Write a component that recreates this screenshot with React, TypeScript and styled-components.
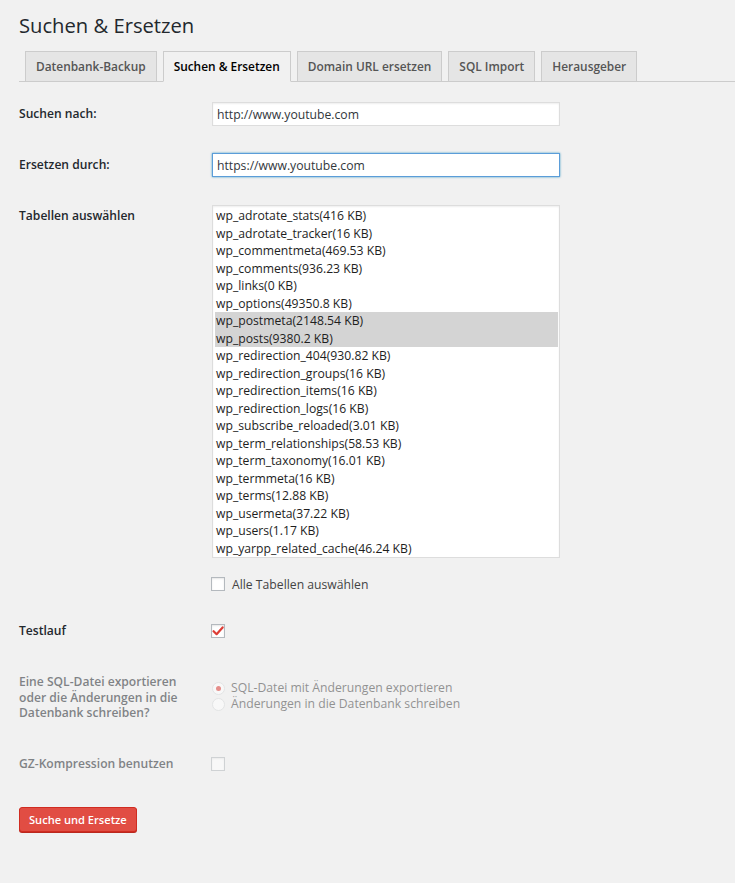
import React from "react";
import styled, { createGlobalStyle } from "styled-components";

const Global = createGlobalStyle`
  html, body { margin: 0; padding: 0; background: #f1f1f1; }
  body { font-family: "Open Sans", "Liberation Sans", sans-serif; font-size: 12.2px; color: #444; }
  * { box-sizing: border-box; }
`;

const Page = styled.div`
  padding: 11px 0 60px 19px;
  min-height: 883px;
`;

const Title = styled.h1`
  margin: 0;
  font-size: 20.2px;
  font-weight: 400;
  line-height: 29px;
  color: #23282d;
`;

const Tabs = styled.nav`
  display: flex;
  margin-top: 11px;
  border-bottom: 1px solid #ccc;
  height: 31px;
`;

const Tab = styled.a<{ $active?: boolean }>`
  display: block;
  margin-left: 6px;
  padding: 5px 10px;
  height: 31px;
  line-height: 19px;
  font-size: 11.9px;
  font-weight: 600;
  border: 1px solid #ccc;
  border-bottom-color: ${(p) => (p.$active ? "#f1f1f1" : "#ccc")};
  background: ${(p) => (p.$active ? "#f1f1f1" : "#e5e5e5")};
  color: ${(p) => (p.$active ? "#000" : "#555")};
  white-space: nowrap;
  cursor: pointer;
`;

const Row = styled.div<{ $top: number; $align?: string; $faded?: boolean }>`
  display: grid;
  grid-template-columns: 193px 348px;
  align-items: ${(p) => p.$align || "center"};
  margin-top: ${(p) => p.$top}px;
  opacity: ${(p) => (p.$faded ? 0.55 : 1)};
`;

const Label = styled.div<{ $pad?: number }>`
  font-size: 12.1px;
  font-weight: 600;
  color: #23282d;
  line-height: 15.5px;
  padding-top: ${(p) => p.$pad || 0}px;
`;

const Input = styled.input<{ $focus?: boolean }>`
  width: 348px;
  height: 24px;
  margin: 0;
  padding: 0 4px;
  font-family: inherit;
  font-size: 12.2px;
  color: #32373c;
  background: #fff;
  border: 1px solid ${(p) => (p.$focus ? "#5b9dd9" : "#ddd")};
  box-shadow: ${(p) =>
    p.$focus ? "0 0 2px rgba(30,140,190,.8)" : "inset 0 1px 2px rgba(0,0,0,.07)"};
  outline: none;
`;

const Field = styled.div<{ $pad?: number }>`
  display: flex;
  flex-direction: column;
  padding-top: ${(p) => p.$pad || 0}px;
`;

const List = styled.div`
  width: 348px;
  height: 353px;
  background: #fff;
  border: 1px solid #ddd;
  box-shadow: inset 0 1px 2px rgba(0,0,0,.07);
  padding: 1px 1px 0 2px;
  overflow: hidden;
`;

const Option = styled.div<{ $sel?: boolean }>`
  height: 17.5px;
  line-height: 17.5px;
  padding-left: 1px;
  color: #1e1e1e;
  background: ${(p) => (p.$sel ? "#d4d4d4" : "transparent")};
  white-space: nowrap;
`;

const CheckLine = styled.label<{ $top?: number }>`
  display: flex;
  align-items: center;
  height: 18px;
  margin-top: ${(p) => p.$top || 0}px;
  color: #444;
`;

const Box = styled.span`
  display: inline-flex;
  align-items: center;
  justify-content: center;
  width: 14px;
  height: 14px;
  margin-left: -1px;
  margin-right: 7px;
  background: #fff;
  border: 1px solid #b4b9be;
  box-shadow: inset 0 1px 2px rgba(0,0,0,.1);
  flex: none;
`;

const Radio = styled.span<{ $on?: boolean }>`
  position: relative;
  display: inline-block;
  width: 13px;
  height: 13px;
  margin-right: 6px;
  border-radius: 50%;
  background: #fff;
  border: 1px solid #d8dadc;
  flex: none;
  &::after {
    content: "";
    display: ${(p) => (p.$on ? "block" : "none")};
    position: absolute;
    left: 3px;
    top: 3px;
    width: 5px;
    height: 5px;
    border-radius: 50%;
    background: #dd3d36;
  }
`;

const RadioLine = styled.label`
  display: flex;
  align-items: center;
  height: 16px;
  line-height: 16px;
  color: #444;
  white-space: nowrap;
`;

const Button = styled.button`
  margin-top: 34px;
  height: 25px;
  padding: 0 9px;
  font-family: inherit;
  font-size: 11.1px;
  font-weight: 600;
  line-height: 23px;
  color: #fff;
  background: #e14d43;
  border: 1px solid #d02c21;
  border-radius: 3px;
  box-shadow: 0 1px 0 #ba281e;
  cursor: pointer;
`;

const tables: [string, boolean][] = [
  ["wp_adrotate_stats(416 KB)", false],
  ["wp_adrotate_tracker(16 KB)", false],
  ["wp_commentmeta(469.53 KB)", false],
  ["wp_comments(936.23 KB)", false],
  ["wp_links(0 KB)", false],
  ["wp_options(49350.8 KB)", false],
  ["wp_postmeta(2148.54 KB)", true],
  ["wp_posts(9380.2 KB)", true],
  ["wp_redirection_404(930.82 KB)", false],
  ["wp_redirection_groups(16 KB)", false],
  ["wp_redirection_items(16 KB)", false],
  ["wp_redirection_logs(16 KB)", false],
  ["wp_subscribe_reloaded(3.01 KB)", false],
  ["wp_term_relationships(58.53 KB)", false],
  ["wp_term_taxonomy(16.01 KB)", false],
  ["wp_termmeta(16 KB)", false],
  ["wp_terms(12.88 KB)", false],
  ["wp_usermeta(37.22 KB)", false],
  ["wp_users(1.17 KB)", false],
  ["wp_yarpp_related_cache(46.24 KB)", false],
];

const Check = () => (
  <svg width="12" height="12" viewBox="0 0 12 12">
    <path d="M1.6 6.2 L4.6 9.2 L10.6 2.4" fill="none" stroke="#dd3d36" strokeWidth="2.2" strokeLinecap="round" strokeLinejoin="round" />
  </svg>
);

export default function App() {
  return (
    <Page>
      <Global />
      <Title>Suchen &amp; Ersetzen</Title>
      <Tabs>
        <Tab>Datenbank-Backup</Tab>
        <Tab $active>Suchen &amp; Ersetzen</Tab>
        <Tab>Domain URL ersetzen</Tab>
        <Tab>SQL Import</Tab>
        <Tab>Herausgeber</Tab>
      </Tabs>

      <Row $top={20}>
        <Label>Suchen nach:</Label>
        <Input defaultValue="http://www.youtube.com" />
      </Row>
      <Row $top={27}>
        <Label>Ersetzen durch:</Label>
        <Input $focus defaultValue="https://www.youtube.com" />
      </Row>
      <Row $top={28} $align="start">
        <Label $pad={3}>Tabellen auswählen</Label>
        <Field>
          <List>
            {tables.map(([t, s]) => (
              <Option key={t} $sel={s}>{t}</Option>
            ))}
          </List>
          <CheckLine $top={17}>
            <Box />
            Alle Tabellen auswählen
          </CheckLine>
        </Field>
      </Row>
      <Row $top={29}>
        <Label>Testlauf</Label>
        <CheckLine>
          <Box>
            <Check />
          </Box>
        </CheckLine>
      </Row>
      <Row $top={34} $align="start" $faded>
        <Label>
          Eine SQL-Datei exportieren
          <br />
          oder die Änderungen in die
          <br />
          Datenbank schreiben?
        </Label>
        <Field $pad={6}>
          <RadioLine>
            <Radio $on />
            SQL-Datei mit Änderungen exportieren
          </RadioLine>
          <RadioLine>
            <Radio />
            Änderungen in die Datenbank schreiben
          </RadioLine>
        </Field>
      </Row>
      <Row $top={34} $faded>
        <Label>GZ-Kompression benutzen</Label>
        <CheckLine>
          <Box />
        </CheckLine>
      </Row>
      <Button>Suche und Ersetze</Button>
    </Page>
  );
}
